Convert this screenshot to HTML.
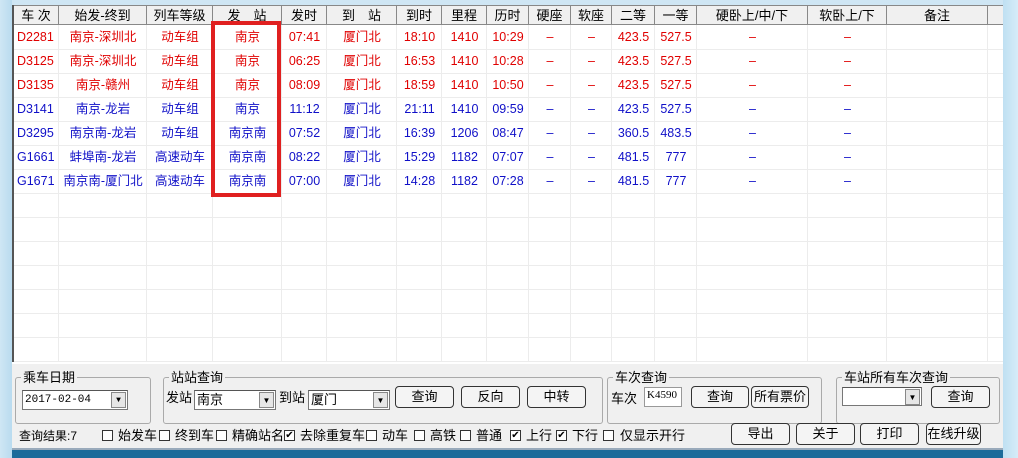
<!DOCTYPE html><html><head><meta charset="utf-8"><style>
*{margin:0;padding:0;box-sizing:border-box}
body{width:1018px;height:458px;overflow:hidden;background:#f0f0f0;font-family:"Liberation Sans","Noto Sans CJK SC",sans-serif;font-size:12.5px;position:relative}
.a{position:absolute}
.lstrip{left:0;top:0;width:12px;height:458px;background:linear-gradient(90deg,#cfe6f4,#b9dbef)}
.rstrip{left:1003px;top:0;width:15px;height:458px;background:linear-gradient(90deg,#bfe0f2,#d6ecf8)}
.top{left:0;top:0;width:1018px;height:5px;background:#cfe6f4}
.grid{left:12px;top:5px;width:991px;height:357px;background:#fff;border-left:2px solid #555}
.hd{top:5px;height:20px;background:#f0f0f0;border-right:1px solid #888;border-bottom:1px solid #888;border-top:1px solid #888;text-align:center;line-height:19px;font-size:13px}
.vl{top:25px;width:1px;height:337px;background:#ececec}
.hl{left:14px;width:989px;height:1px;background:#ececec}
.c{height:24px;line-height:24px;text-align:center;font-size:12.5px}
.r{color:#e00000}.b{color:#1010c8}
.box{left:211px;top:21px;width:70px;height:176px;border:4px solid #e02020}
.panel{left:12px;top:362px;width:991px;height:86px;background:#f0f0f0;border-top:2px solid #fff}
.bar{left:12px;top:448px;width:991px;height:10px;background:#1b6b9a;border-top:2px solid #9ab}
fieldset{position:absolute;border:1px solid #aaa;border-radius:3px}
.lg{position:absolute;background:#f0f0f0;font-size:13px;padding:0 2px;line-height:14px}
.btn{position:absolute;border:1px solid #333;border-radius:4px;background:#f4f4f4;text-align:center;font-size:13px;line-height:20px;height:22px}
.sel{position:absolute;background:#fff;border:1px solid #777;border-top-color:#555;height:20px;font-size:13px;line-height:18px;padding-left:2px}
.dd{position:absolute;right:1px;top:1px;width:15px;height:16px;background:#e6e6e6;border:1px solid #888;font-size:8px;text-align:center;line-height:15px}
.t{position:absolute;font-size:13px;line-height:16px;white-space:nowrap}
.cb{position:absolute;top:430px;width:11px;height:11px;border:1px solid #333;background:#fff;font-size:10px;line-height:9px;text-align:center}
</style></head><body>
<div class="a top"></div>
<div class="a lstrip"></div>
<div class="a rstrip"></div>
<div class="a grid"></div>
<div id="g"></div>
<div class="a box"></div>
<div class="a panel"></div>
<fieldset style="left:15px;top:377px;width:136px;height:47px"></fieldset><div class="lg" style="left:21px;top:371px">乘车日期</div>
<div class="sel" style="left:22px;top:390px;width:106px;font-family:'Liberation Mono',monospace;font-size:11px">2017-02-04<div class="dd">▼</div></div>
<fieldset style="left:163px;top:377px;width:440px;height:47px"></fieldset><div class="lg" style="left:169px;top:371px">站站查询</div>
<div class="t" style="left:166px;top:390px">发站</div>
<div class="sel" style="left:194px;top:390px;width:82px">南京<div class="dd">▼</div></div>
<div class="t" style="left:279px;top:390px">到站</div>
<div class="sel" style="left:308px;top:390px;width:82px">厦门<div class="dd">▼</div></div>
<div class="btn" style="left:395px;top:386px;width:59px">查询</div>
<div class="btn" style="left:461px;top:386px;width:59px">反向</div>
<div class="btn" style="left:527px;top:386px;width:59px">中转</div>
<fieldset style="left:607px;top:377px;width:215px;height:47px"></fieldset><div class="lg" style="left:613px;top:371px">车次查询</div>
<div class="t" style="left:611px;top:391px">车次</div>
<div class="sel" style="left:644px;top:387px;width:38px;font-family:'Liberation Serif',serif;font-size:11px;line-height:14px;border-color:#999">K4590</div>
<div class="btn" style="left:691px;top:386px;width:58px">查询</div>
<div class="btn" style="left:751px;top:386px;width:58px">所有票价</div>
<fieldset style="left:836px;top:377px;width:164px;height:47px"></fieldset><div class="lg" style="left:842px;top:371px">车站所有车次查询</div>
<div class="sel" style="left:842px;top:387px;width:80px;height:19px"><div class="dd">▼</div></div>
<div class="btn" style="left:931px;top:386px;width:59px">查询</div>
<div class="t" style="left:19px;top:428px;font-size:12px">查询结果:7</div>
<div class="cb" style="left:102px"></div><div class="t" style="left:118px;top:428px">始发车</div>
<div class="cb" style="left:159px"></div><div class="t" style="left:175px;top:428px">终到车</div>
<div class="cb" style="left:216px"></div><div class="t" style="left:232px;top:428px">精确站名</div>
<div class="cb" style="left:284px">✔</div><div class="t" style="left:300px;top:428px">去除重复车</div>
<div class="cb" style="left:366px"></div><div class="t" style="left:382px;top:428px">动车</div>
<div class="cb" style="left:414px"></div><div class="t" style="left:430px;top:428px">高铁</div>
<div class="cb" style="left:460px"></div><div class="t" style="left:476px;top:428px">普通</div>
<div class="cb" style="left:510px">✔</div><div class="t" style="left:526px;top:428px">上行</div>
<div class="cb" style="left:556px">✔</div><div class="t" style="left:572px;top:428px">下行</div>
<div class="cb" style="left:603px"></div><div class="t" style="left:620px;top:428px">仅显示开行</div>
<div class="btn" style="left:731px;top:423px;width:59px">导出</div>
<div class="btn" style="left:796px;top:423px;width:59px">关于</div>
<div class="btn" style="left:860px;top:423px;width:59px">打印</div>
<div class="btn" style="left:926px;top:423px;width:55px">在线升级</div>
<div class="a bar"></div>
<script>
var xs=[14,59,147,213,282,327,397,442,487,529,571,612,655,697,808,887,988];
var hs=["车 次","始发-终到","列车等级","发　站","发时","到　站","到时","里程","历时","硬座","软座","二等","一等","硬卧上/中/下","软卧上/下","备注"];
var rows=[
["r","D2281","南京-深圳北","动车组","南京","07:41","厦门北","18:10","1410","10:29","–","–","423.5","527.5","–","–",""],
["r","D3125","南京-深圳北","动车组","南京","06:25","厦门北","16:53","1410","10:28","–","–","423.5","527.5","–","–",""],
["r","D3135","南京-赣州","动车组","南京","08:09","厦门北","18:59","1410","10:50","–","–","423.5","527.5","–","–",""],
["b","D3141","南京-龙岩","动车组","南京","11:12","厦门北","21:11","1410","09:59","–","–","423.5","527.5","–","–",""],
["b","D3295","南京南-龙岩","动车组","南京南","07:52","厦门北","16:39","1206","08:47","–","–","360.5","483.5","–","–",""],
["b","G1661","蚌埠南-龙岩","高速动车","南京南","08:22","厦门北","15:29","1182","07:07","–","–","481.5","777","–","–",""],
["b","G1671","南京南-厦门北","高速动车","南京南","07:00","厦门北","14:28","1182","07:28","–","–","481.5","777","–","–",""]];
var h="";
for(var i=0;i<16;i++){h+='<div class="a hd" style="left:'+xs[i]+'px;width:'+(xs[i+1]-xs[i])+'px">'+hs[i]+'</div>';}
h+='<div class="a hd" style="left:988px;width:15px;border-right:none"></div>';
for(var i=1;i<17;i++)h+='<div class="a vl" style="left:'+(xs[i]-1)+'px"></div>';
for(var y=49;y<362;y+=24)h+='<div class="a hl" style="top:'+y+'px"></div>';
rows.forEach(function(r,k){for(var i=0;i<16;i++){var al=i==0?'text-align:left;padding-left:3px;':'';
h+='<div class="a c '+r[0]+'" style="'+al+'left:'+xs[i]+'px;top:'+(25+24*k)+'px;width:'+(xs[i+1]-xs[i])+'px">'+r[i+1]+'</div>';}});
document.getElementById('g').innerHTML=h;
</script>
</body></html>
